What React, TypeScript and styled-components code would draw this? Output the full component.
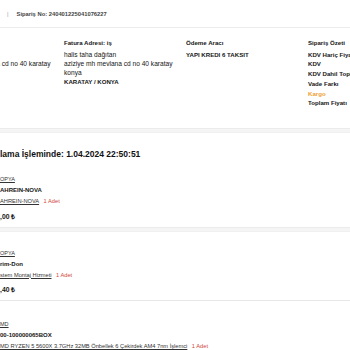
import React from 'react';
import styled, { createGlobalStyle } from 'styled-components';

const GlobalStyle = createGlobalStyle`
    html, body {
        margin: 0;
        padding: 0;
        background: #fff;
        overflow: hidden;
    }
    body {
        font-family: "Liberation Sans", Arial, sans-serif;
        color: #151515;
    }
`;

const Page = styled.div`
    width: 350px;
    height: 350px;
    overflow: hidden;
`;

const TopBar = styled.div`
    display: flex;
    align-items: center;
    gap: 8px;
    height: 27px;
    padding-left: 7px;
    border-bottom: 1px solid #ececec;
    font-size: 5.8px;
    font-weight: bold;
    color: #444;
    white-space: nowrap;
`;

const Divider = styled.span`
    color: #999;
    font-weight: normal;
`;

const Summary = styled.div`
    display: grid;
    grid-template-columns: repeat(4, 122px);
    margin-left: -58px;
    padding: 10px 0 0;
    height: 90px;
    font-size: 6.6px;
    white-space: nowrap;
`;

const Column = styled.div<{ $row?: number }>`
    display: flex;
    flex-direction: column;
    line-height: ${(p) => p.$row ?? 9}px;
`;

const ColTitle = styled.div`
    font-size: 6.1px;
    font-weight: bold;
    line-height: 9px;
    margin-bottom: 2.5px;
`;

const Line = styled.div<{ $bold?: boolean; $color?: string }>`
    font-weight: ${(p) => (p.$bold ? 'bold' : 'normal')};
    font-size: ${(p) => (p.$bold ? '6.1px' : 'inherit')};
    color: ${(p) => p.$color ?? '#151515'};
`;

const Band = styled.div`
    height: 3px;
    background: #f5f5f5;
    border-top: 1px solid #ebebeb;
    border-bottom: 1px solid #f0f0f0;
`;

const Card = styled.div`
    padding-top: 16px;
    white-space: nowrap;
`;

const Heading = styled.div`
    font-size: 8.5px;
    font-weight: bold;
    line-height: 11px;
    color: #111;
`;

const Item = styled.div<{ $top: number; $line?: boolean }>`
    padding: ${(p) => p.$top}px 0 5px;
    border-bottom: ${(p) => (p.$line ? '1px solid #e8e8e8' : 'none')};
    font-size: 5.7px;
    line-height: 11px;
`;

const Brand = styled.div`
    font-size: 5.5px;
    text-decoration: underline;
    color: #333;
`;

const Name = styled.div`
    font-weight: bold;
    font-size: 6px;
`;

const Desc = styled.div`
    display: flex;
    gap: 4.5px;
`;

const DescLink = styled.span`
    text-decoration: underline;
    color: #333;
`;

const Qty = styled.span`
    color: #d0453a;
`;

const Price = styled.div`
    margin-top: 3.5px;
    font-weight: bold;
    font-size: 6.8px;
`;

type Product = {
    brand: string;
    name: string;
    desc: string;
    qty: string;
    price?: string;
};

const products: Product[] = [
    { brand: 'OPYA', name: 'AHREIN-NOVA', desc: 'AHREIN-NOVA', qty: '1 Adet', price: ',00 ₺' },
    { brand: 'OPYA', name: 'rim-Don', desc: 'stem Montaj Hizmeti', qty: '1 Adet', price: ',40 ₺' },
    {
        brand: 'MD',
        name: '00-100000065BOX',
        desc: 'MD RYZEN 5 5600X 3.7GHz 32MB Önbellek 6 Çekirdek AM4 7nm İşlemci',
        qty: '1 Adet',
    },
];

const ProductRow: React.FC<{ product: Product; top: number; line?: boolean }> = ({ product, top, line }) => (
    <Item $top={top} $line={line}>
        <Brand>{product.brand}</Brand>
        <Name>{product.name}</Name>
        <Desc>
            <DescLink>{product.desc}</DescLink>
            <Qty>{product.qty}</Qty>
        </Desc>
        {product.price && <Price>{product.price}</Price>}
    </Item>
);

const App: React.FC = () => {
    return (
        <Page>
            <GlobalStyle />
            <TopBar>
                <Divider>|</Divider>
                <span>Sipariş No: 240401225041076227</span>
            </TopBar>
            <Summary>
                <Column>
                    <ColTitle>Teslimat Adresi: iş</ColTitle>
                    <Line>halis taha dağıtan</Line>
                    <Line>aziziye mh mevlana cd no 40 karatay</Line>
                    <Line>konya</Line>
                    <Line $bold>KARATAY / KONYA</Line>
                </Column>
                <Column>
                    <ColTitle>Fatura Adresi: iş</ColTitle>
                    <Line>halis taha dağıtan</Line>
                    <Line>aziziye mh mevlana cd no 40 karatay</Line>
                    <Line>konya</Line>
                    <Line $bold>KARATAY / KONYA</Line>
                </Column>
                <Column>
                    <ColTitle>Ödeme Aracı</ColTitle>
                    <Line $bold>YAPI KREDI 6 TAKSIT</Line>
                </Column>
                <Column $row={9.8}>
                    <ColTitle>Sipariş Özeti</ColTitle>
                    <Line $bold>KDV Hariç Fiyatı</Line>
                    <Line $bold>KDV</Line>
                    <Line $bold>KDV Dahil Toplam</Line>
                    <Line $bold>Vade Farkı</Line>
                    <Line $bold $color="#f0a030">Kargo</Line>
                    <Line $bold>Toplam Fiyatı</Line>
                </Column>
            </Summary>
            <Band />
            <Card>
                <Heading>lama İşleminde: 1.04.2024 22:50:51</Heading>
                <ProductRow product={products[0]} top={14} />
                <Band />
                <ProductRow product={products[1]} top={16} line />
                <ProductRow product={products[2]} top={18} />
            </Card>
        </Page>
    );
};

export default App;
